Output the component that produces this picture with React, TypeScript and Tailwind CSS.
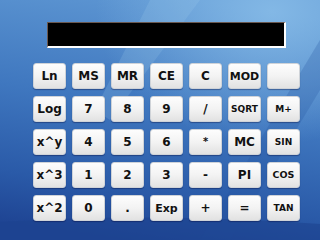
import React from "react";

type Key = { label: string; size?: string };

const keys: Key[] = [
  { label: "Ln" },
  { label: "MS" },
  { label: "MR" },
  { label: "CE" },
  { label: "C" },
  { label: "MOD", size: "text-[11px]" },
  { label: "" },
  { label: "Log" },
  { label: "7" },
  { label: "8" },
  { label: "9" },
  { label: "/" },
  { label: "SQRT", size: "text-[9px]" },
  { label: "M+", size: "text-[9px]" },
  { label: "x^y" },
  { label: "4" },
  { label: "5" },
  { label: "6" },
  { label: "*", size: "text-[10px]" },
  { label: "MC" },
  { label: "SIN", size: "text-[9px]" },
  { label: "x^3" },
  { label: "1" },
  { label: "2" },
  { label: "3" },
  { label: "-" },
  { label: "PI" },
  { label: "COS", size: "text-[9.5px]" },
  { label: "x^2" },
  { label: "0" },
  { label: "." },
  { label: "Exp", size: "text-[11px]" },
  { label: "+" },
  { label: "=" },
  { label: "TAN", size: "text-[9px]" },
];

function Wallpaper() {
  return (
    <svg className="absolute inset-0" width="320" height="240" viewBox="0 0 320 240">
      <defs>
        <linearGradient id="bg" x1="0.6" y1="0" x2="0.4" y2="1">
          <stop offset="0" stopColor="#5e97d3" />
          <stop offset="0.45" stopColor="#3f77bf" />
          <stop offset="0.8" stopColor="#2a5aa8" />
          <stop offset="1" stopColor="#1f4594" />
        </linearGradient>
        <radialGradient id="glow" cx="0.85" cy="0.05" r="0.55">
          <stop offset="0" stopColor="#8cc0ea" stopOpacity="0.8" />
          <stop offset="1" stopColor="#8cc0ea" stopOpacity="0" />
        </radialGradient>
      </defs>
      <rect width="320" height="240" fill="url(#bg)" />
      <rect width="320" height="240" fill="url(#glow)" />
      <path d="M150 0 L200 0 L110 120 L95 110 Z" fill="#a9d0f0" opacity="0.18" />
      <path d="M320 40 L320 90 L230 240 L200 240 Z" fill="#24549f" opacity="0.25" />
      <path d="M0 222 Q160 212 320 224 L320 240 L0 240 Z" fill="#1c4290" opacity="0.6" />
    </svg>
  );
}

export default function App() {
  return (
    <div
      className="relative w-[320px] h-[240px] overflow-hidden"
      style={{ fontFamily: '"DejaVu Sans", Verdana, sans-serif' }}
    >
      <Wallpaper />
      <div className="relative flex flex-col">
        {/* Display */}
        <div className="mt-[22px] ml-[47px] w-[239px] h-[26px] bg-black border-t border-l border-t-[#6a5850] border-l-[#6a5850] border-b-2 border-r-2 border-b-white border-r-white" />

        {/* Keypad */}
        <div className="mt-[15px] ml-[33px] grid grid-cols-[repeat(7,33px)] grid-rows-[repeat(5,26px)] gap-x-[6px] gap-y-[7px]">
          {keys.map((k, i) => (
            <button
              key={i}
              className={`flex items-center justify-center rounded-[3px] border border-[#cfd3d8] bg-gradient-to-b from-[#fdfdfd] via-[#f3f3f3] to-[#e2e2e2] shadow-[0_1px_1px_rgba(0,0,50,0.35)] font-bold text-[#111] leading-none ${
                k.size ?? "text-[12px]"
              }`}
            >
              {k.label}
            </button>
          ))}
        </div>
      </div>
    </div>
  );
}
